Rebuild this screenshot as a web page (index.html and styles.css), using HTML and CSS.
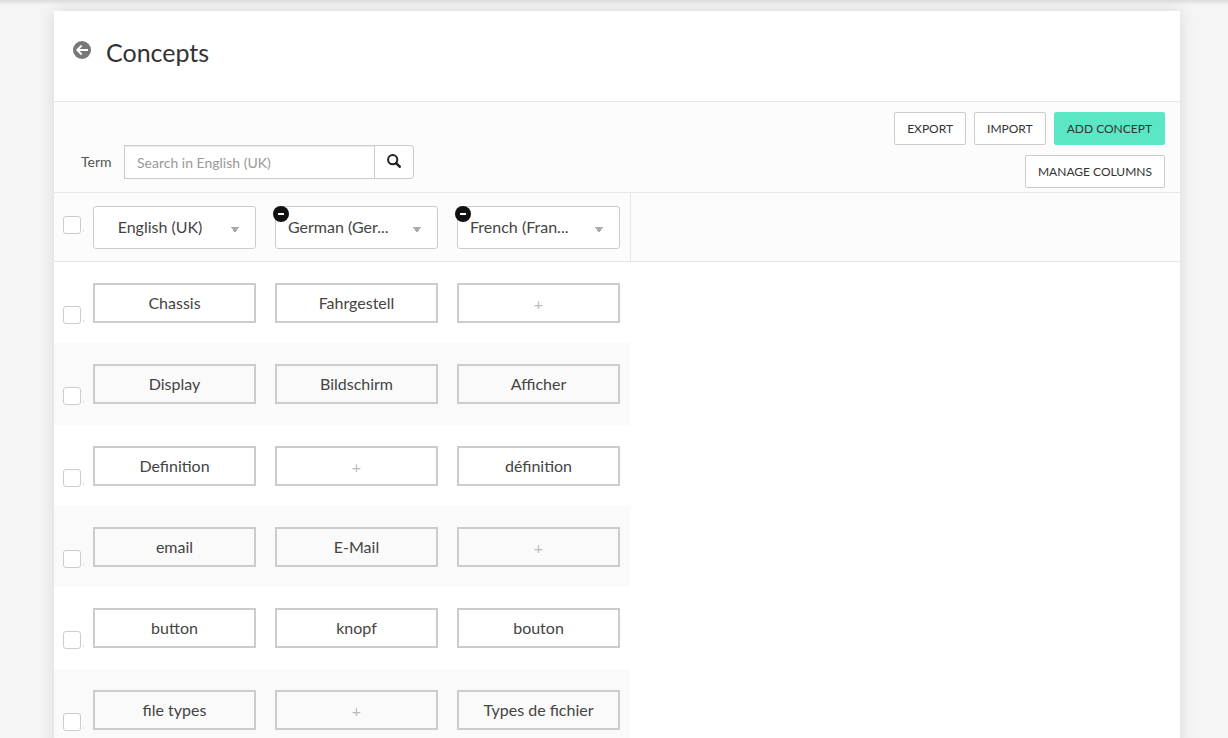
FILE: index.html
```html
<!DOCTYPE html>
<html lang="en">
<head>
<meta charset="utf-8">
<title>Concepts</title>
<link rel="stylesheet" href="styles.css">
</head>
<body>
<main class="card">
  <header class="card-header">
    <a class="back" href="#" aria-label="Back">
      <svg viewBox="0 0 18 18" width="18" height="18"><circle cx="9" cy="9" r="9" fill="#777"/><path d="M15 9H4.5M8.7 4.5L4.2 9l4.5 4.5" fill="none" stroke="#fff" stroke-width="1.8"/></svg>
    </a>
    <h1 class="title">Concepts</h1>
  </header>
  <section class="toolbar">
    <form class="search">
      <label class="search-label" for="term">Term</label>
      <input class="search-input" id="term" type="text" placeholder="Search in English (UK)">
      <button class="search-button" type="button" aria-label="Search">
        <svg viewBox="0 0 14 14" width="14" height="14" fill="none" stroke="#222"><circle cx="5.7" cy="5.7" r="4.6" stroke-width="2"/><path d="M9.1 9.1l3.6 3.6" stroke-width="2.6" stroke-linecap="round"/></svg>
      </button>
    </form>
    <div class="actions">
      <div class="actions-row">
        <button class="btn" type="button">EXPORT</button>
        <button class="btn" type="button">IMPORT</button>
        <button class="btn btn-primary" type="button">ADD CONCEPT</button>
      </div>
      <button class="btn" type="button">MANAGE COLUMNS</button>
    </div>
  </section>
  <table class="concepts">
    <colgroup><col class="col-check"><col class="col-lang"><col class="col-lang"><col class="col-lang"><col></colgroup>
    <thead>
      <tr>
        <th class="check"><label class="check-label"><input class="checkbox" type="checkbox" aria-label="Select all"></label></th>
        <th class="cell"><select class="lang" aria-label="Column 1 language"><option>English (UK)</option></select></th>
        <th class="cell"><div class="lang-wrap"><select class="lang lang-clipped" aria-label="Column 2 language"><option>German (Ger...</option></select><button class="remove" type="button" aria-label="Remove German"></button></div></th>
        <th class="cell"><div class="lang-wrap"><select class="lang lang-clipped" aria-label="Column 3 language"><option>French (Fran...</option></select><button class="remove" type="button" aria-label="Remove French"></button></div></th>
        <td class="rest"></td>
      </tr>
    </thead>
    <tbody>
      <tr>
        <td class="check"><label class="check-label"><input class="checkbox" type="checkbox" aria-label="Select Chassis"></label></td>
        <td class="cell"><button class="term" type="button">Chassis</button></td>
        <td class="cell"><button class="term" type="button">Fahrgestell</button></td>
        <td class="cell"><button class="term term-add" type="button">+</button></td>
      </tr>
      <tr>
        <td class="check"><label class="check-label"><input class="checkbox" type="checkbox" aria-label="Select Display"></label></td>
        <td class="cell"><button class="term" type="button">Display</button></td>
        <td class="cell"><button class="term" type="button">Bildschirm</button></td>
        <td class="cell"><button class="term" type="button">Afficher</button></td>
      </tr>
      <tr>
        <td class="check"><label class="check-label"><input class="checkbox" type="checkbox" aria-label="Select Definition"></label></td>
        <td class="cell"><button class="term" type="button">Definition</button></td>
        <td class="cell"><button class="term term-add" type="button">+</button></td>
        <td class="cell"><button class="term" type="button">définition</button></td>
      </tr>
      <tr>
        <td class="check"><label class="check-label"><input class="checkbox" type="checkbox" aria-label="Select email"></label></td>
        <td class="cell"><button class="term" type="button">email</button></td>
        <td class="cell"><button class="term" type="button">E-Mail</button></td>
        <td class="cell"><button class="term term-add" type="button">+</button></td>
      </tr>
      <tr>
        <td class="check"><label class="check-label"><input class="checkbox" type="checkbox" aria-label="Select button"></label></td>
        <td class="cell"><button class="term" type="button">button</button></td>
        <td class="cell"><button class="term" type="button">knopf</button></td>
        <td class="cell"><button class="term" type="button">bouton</button></td>
      </tr>
      <tr>
        <td class="check"><label class="check-label"><input class="checkbox" type="checkbox" aria-label="Select file types"></label></td>
        <td class="cell"><button class="term" type="button">file types</button></td>
        <td class="cell"><button class="term term-add" type="button">+</button></td>
        <td class="cell"><button class="term" type="button">Types de fichier</button></td>
      </tr>
    </tbody>
  </table>
</main>
</body>
</html>
```
FILE: styles.css
```css
* { box-sizing: border-box; }

html { height: 100%; overflow: hidden; background: #f5f5f5; }

body {
  min-height: 100%;
  margin: 0;
  padding: 11px 48px 0 54px;
  background: linear-gradient(#dcdcdc, #f5f5f5 5px);
  font-family: Lato, "Open Sans", sans-serif;
  font-size: 14px;
  color: #444;
}

button, input, select { font: inherit; color: inherit; }

.card {
  min-height: 740px;
  background: #fff;
  box-shadow: 0 0 16px rgba(0, 0, 0, 0.12);
}

.card-header {
  display: flex;
  align-items: center;
  gap: 15px;
  height: 90px;
  padding: 0 19px 8px;
}

.back { display: block; height: 22px; }
.back svg { display: block; }

.title {
  margin: 0;
  font-size: 25px;
  line-height: 32px;
  font-weight: 400;
  color: #333;
}

.toolbar {
  display: flex;
  justify-content: space-between;
  padding: 10px 15px 4px 27px;
  background: #fcfcfc;
  border: solid #e7e7e7;
  border-width: 1px 0;
}

.search { display: flex; align-items: center; align-self: flex-end; padding-bottom: 9px; }
.search-label { width: 43px; padding-bottom: 2px; color: #555; }

.search-input {
  width: 251px;
  height: 34px;
  padding: 0 12px;
  border: 1px solid #ccc;
  background: #fff;
  box-shadow: inset 0 1px 1px rgba(0, 0, 0, 0.075);
}
.search-input::placeholder { color: #999; opacity: 1; }

.search-button {
  width: 39px;
  height: 34px;
  padding: 0 0 2px;
  border: 1px solid #ccc;
  border-left: 0;
  border-radius: 0 4px 4px 0;
  background: #fff;
}
.search-button svg { display: block; margin: 0 auto; }

.actions { display: flex; flex-direction: column; align-items: flex-end; gap: 10px; }
.actions-row { display: flex; gap: 8px; }

.btn {
  height: 33px;
  padding: 0 12px;
  border: 1px solid #ccc;
  border-radius: 2px;
  background: #fff;
  font-size: 12px;
  color: #333;
}
.btn-primary { background: #5ce7c4; border-color: #5ce7c4; }

.concepts { width: 100%; table-layout: fixed; border-collapse: separate; border-spacing: 0; }
.concepts th, .concepts td { padding: 0; vertical-align: top; font-weight: 400; }
.concepts thead th, .concepts thead td {
  height: 69px;
  background: #fcfcfc;
  border-bottom: 1px solid #e7e7e7;
}
.concepts .rest { border-left: 1px solid #e7e7e7; }
.concepts tbody td { height: 81px; }
.concepts tbody tr:nth-child(3n+2) td { height: 82px; }
.concepts tbody tr:nth-child(even) td { background: #fafafa; }
.col-check { width: 30px; }
.col-lang { width: 182px; }

.concepts thead .cell { padding: 13px 10px 0 9px; }
.concepts tbody .cell { padding: 21px 10px 0 9px; }
.concepts thead .check { padding: 23px 0 0 9px; }
.concepts tbody .check { padding: 44px 0 0 9px; }

.check-label { display: flex; align-items: flex-end; gap: 2px; }
.check-label::after { content: ""; width: 1px; height: 2px; margin-bottom: 2px; background: #f3d9ad; }

.checkbox {
  appearance: none;
  width: 18px;
  height: 18px;
  margin: 0;
  border: 1px solid #ccc;
  border-radius: 3px;
  background: #fff;
}

.lang-wrap { position: relative; }

.lang {
  appearance: none;
  display: block;
  width: 100%;
  height: 43px;
  padding: 0 37px 2px 8px;
  border: 1px solid #ccc;
  border-radius: 3px;
  background-color: #fff;
  background-image: linear-gradient(to bottom left, #aaa 50%, transparent 50%), linear-gradient(to bottom right, #aaa 50%, transparent 50%);
  background-size: 4px 6px;
  background-position: right 20px top 20px, right 16px top 20px;
  background-repeat: no-repeat;
  font-size: 16px;
  text-align: center;
}
.lang-clipped { padding-left: 12px; text-align: left; }

.remove {
  position: absolute;
  top: 0;
  left: -2px;
  display: flex;
  align-items: center;
  justify-content: center;
  width: 16px;
  height: 16px;
  padding: 0;
  border: 0;
  border-radius: 50%;
  background: #111;
}
.remove::after { content: ""; width: 6px; height: 2px; background: #fff; }

.term {
  display: block;
  width: 100%;
  height: 40px;
  padding: 0 0 2px;
  border: 2px solid #ccc;
  background: transparent;
  font-size: 16px;
}
.term-add { padding: 0; color: #bbb; }
```
